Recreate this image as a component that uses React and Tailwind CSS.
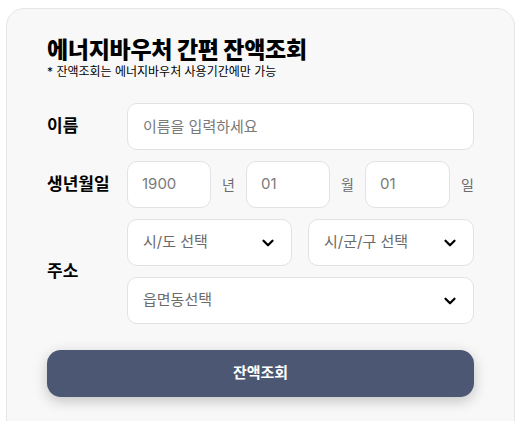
import React, { useState } from 'react';
import { ChevronDown } from 'lucide-react';

const font = { fontFamily: '"Inter", "Noto Sans CJK KR", sans-serif' };

const SelectBox = ({ label, className = '' }) => (
  <div className={`h-[47px] bg-white border border-[#e2e2e2] rounded-[10px] flex items-center justify-between pl-[15px] pr-[14px] ${className}`}>
    <span className="text-[15px] text-[#6b6b6b]">{label}</span>
    <ChevronDown className="w-[18px] h-[18px] text-black" strokeWidth={3} />
  </div>
);

const App = () => {
  const [name, setName] = useState('');

  return (
    <div className="h-[421px] overflow-hidden bg-white pt-[8px] px-[6px]" style={font}>
      <div className="w-[509px] h-[440px] bg-[#f8f8f8] border border-[#e6e6e6] rounded-[18px] pl-[40px] pr-[39px] pt-[27px]">
        {/* Header */}
        <h1 className="text-[23px] leading-[28px] font-extrabold text-black tracking-[-0.3px]">에너지바우처 간편 잔액조회</h1>
        <p className="text-[12px] leading-[14px] text-black mt-[1px]">* 잔액조회는 에너지바우처 사용기간에만 가능</p>

        {/* Form */}
        <div className="mt-[24px] flex flex-col gap-[11px]">
          <div className="flex items-center">
            <label className="w-[80px] shrink-0 text-[17px] font-bold text-black">이름</label>
            <input
              type="text"
              value={name}
              onChange={(e) => setName(e.target.value)}
              placeholder="이름을 입력하세요"
              className="w-[347px] h-[47px] bg-white border border-[#e2e2e2] rounded-[10px] px-[15px] text-[15px] placeholder:text-[#7a7a7a] outline-none"
            />
          </div>

          <div className="flex items-center">
            <label className="w-[80px] shrink-0 text-[17px] font-bold text-black">생년월일</label>
            <div className="h-[47px] w-[84px] shrink-0 bg-white border border-[#e2e2e2] rounded-[10px] flex items-center pl-[14px] text-[15px] text-[#7a7a7a]">1900</div>
            <span className="w-[35px] shrink-0 text-center text-[14px] text-[#6b6b6b]">년</span>
            <div className="h-[47px] w-[84px] shrink-0 bg-white border border-[#e2e2e2] rounded-[10px] flex items-center pl-[14px] text-[15px] text-[#7a7a7a]">01</div>
            <span className="w-[35px] shrink-0 text-center text-[14px] text-[#6b6b6b]">월</span>
            <div className="h-[47px] w-[85px] shrink-0 bg-white border border-[#e2e2e2] rounded-[10px] flex items-center pl-[14px] text-[15px] text-[#7a7a7a]">01</div>
            <span className="w-[35px] shrink-0 text-center text-[14px] text-[#6b6b6b]">일</span>
          </div>

          <div className="flex items-center">
            <label className="w-[80px] shrink-0 text-[17px] font-bold text-black">주소</label>
            <div className="w-[347px] flex flex-col gap-[11px]">
              <div className="flex gap-[16px]">
                <SelectBox label="시/도 선택" className="w-[165px]" />
                <SelectBox label="시/군/구 선택" className="w-[166px]" />
              </div>
              <SelectBox label="읍면동선택" className="w-[347px]" />
            </div>
          </div>
        </div>

        <button className="mt-[26px] w-[427px] h-[47px] bg-[#4c5773] rounded-[14px] text-white text-[15px] font-bold shadow-[0_4px_14px_rgba(0,0,0,0.22)]">
          잔액조회
        </button>
      </div>
    </div>
  );
};

export default App;
